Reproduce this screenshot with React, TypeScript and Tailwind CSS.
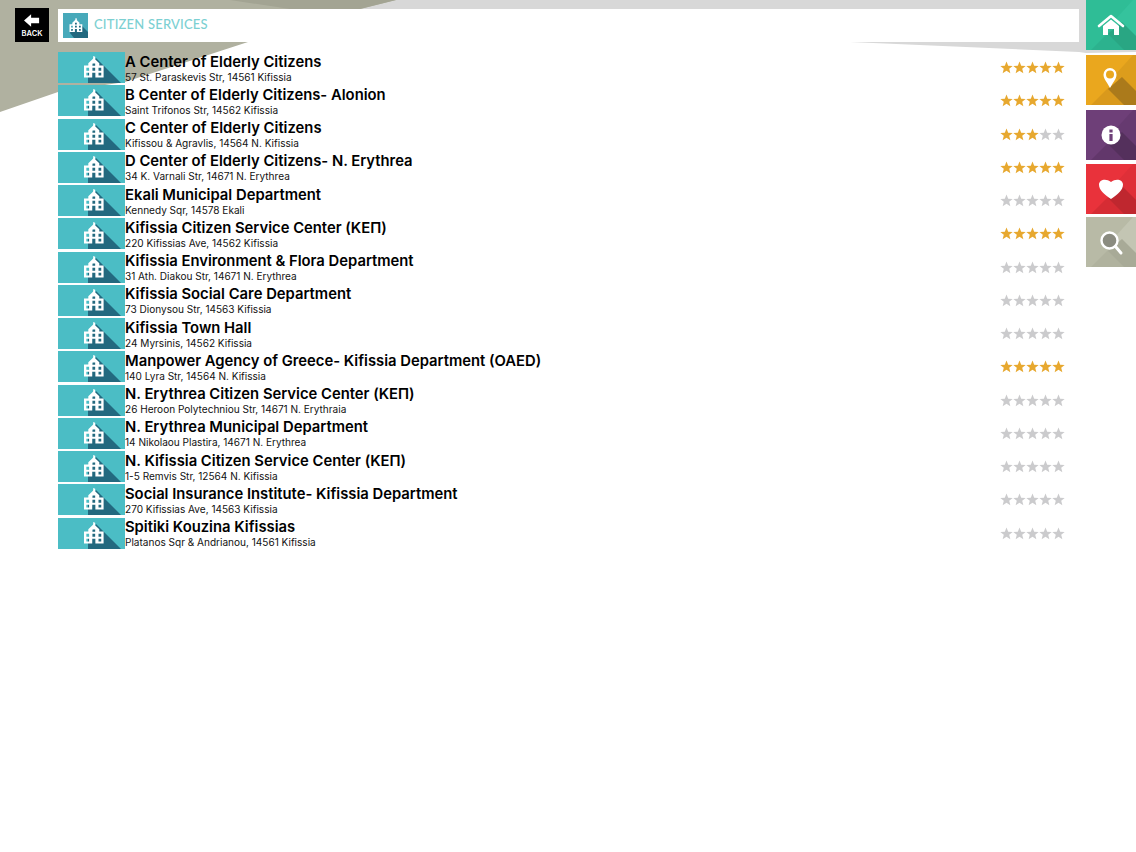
import React from 'react';

const places = [
  { name: 'A Center of Elderly Citizens', address: '57 St. Paraskevis Str, 14561 Kifissia', rating: 5 },
  { name: 'B Center of Elderly Citizens- Alonion', address: 'Saint Trifonos Str, 14562 Kifissia', rating: 5 },
  { name: 'C Center of Elderly Citizens', address: 'Kifissou & Agravlis, 14564 N. Kifissia', rating: 3 },
  { name: 'D Center of Elderly Citizens- N. Erythrea', address: '34 K. Varnali Str, 14671 N. Erythrea', rating: 5 },
  { name: 'Ekali Municipal Department', address: 'Kennedy Sqr, 14578 Ekali', rating: 0 },
  { name: 'Kifissia Citizen Service Center (ΚΕΠ)', address: '220 Kifissias Ave, 14562 Kifissia', rating: 5 },
  { name: 'Kifissia Environment & Flora Department', address: '31 Ath. Diakou Str, 14671 N. Erythrea', rating: 0 },
  { name: 'Kifissia Social Care Department', address: '73 Dionysou Str, 14563 Kifissia', rating: 0 },
  { name: 'Kifissia Town Hall', address: '24 Myrsinis, 14562 Kifissia', rating: 0 },
  { name: 'Manpower Agency of Greece- Kifissia Department (OAED)', address: '140 Lyra Str, 14564 N. Kifissia', rating: 5 },
  { name: 'N. Erythrea Citizen Service Center (ΚΕΠ)', address: '26 Heroon Polytechniou Str, 14671 N. Erythraia', rating: 0 },
  { name: 'N. Erythrea Municipal Department', address: '14 Nikolaou Plastira, 14671 N. Erythrea', rating: 0 },
  { name: 'N. Kifissia Citizen Service Center (ΚΕΠ)', address: '1-5 Remvis Str, 12564 N. Kifissia', rating: 0 },
  { name: 'Social Insurance Institute- Kifissia Department', address: '270 Kifissias Ave, 14563 Kifissia', rating: 0 },
  { name: 'Spitiki Kouzina Kifissias', address: 'Platanos Sqr & Andrianou, 14561 Kifissia', rating: 0 },
];

// schoolhouse glyph, 20 x 22 units
function Building({ x, y, scale }: { x: number; y: number; scale: number }) {
  return (
    <g transform={`translate(${x} ${y}) scale(${scale})`} fill="#fff">
      <path d="M9.4 0 L11.4 0.8 L11.4 3.4 L9.4 3.4 Z" />
      <path
        fillRule="evenodd"
        d="M10 2 L15.6 7.4 L15.6 9.6 L20 9.6 L20 22 L0 22 L0 9.6 L4.4 9.6 L4.4 7.4 Z M8.6 7.6 H11.4 V10 H8.6 Z M8.6 12 H11.4 V15 H8.6 Z M2.4 12 H5.2 V15 H2.4 Z M14.8 12 H17.6 V15 H14.8 Z M2.4 17 H5.2 V20 H2.4 Z M14.8 17 H17.6 V20 H14.8 Z M8.4 17 H11.6 V22 H8.4 Z"
      />
    </g>
  );
}

function Star({ on }: { on: boolean }) {
  return (
    <svg viewBox="0 0 24 24" className={on ? 'w-[13px] h-[13px] fill-[#e7a82f]' : 'w-[13px] h-[13px] fill-[#cbcbcd]'}>
      <path d="M12 1 L15.1 8.6 L23.4 9.2 L17 14.5 L19.1 22.6 L12 18.2 L4.9 22.6 L7 14.5 L0.6 9.2 L8.9 8.6 Z" />
    </svg>
  );
}

function Row({ name, address, rating }: { name: string; address: string; rating: number }) {
  return (
    <div className="flex h-[33.25px] items-start">
      <svg viewBox="0 0 67 31" className="w-[67px] h-[31px] shrink-0">
        <rect width="67" height="31" fill="#4bbdc5" />
        <polygon points="38,6 63,31 30,31 30,20" fill="#23697f" />
        <Building x={26} y={4} scale={0.98} />
      </svg>
      <div className="flex-1 min-w-0 pt-[0.6px]">
        <div className="text-[14.8px] leading-[18px] font-semibold text-black">{name}</div>
        <div className="text-[10.05px] leading-[13px] text-[#111]">{address}</div>
      </div>
      <div className="flex pt-[9px] mr-[14px]">
        {[0, 1, 2, 3, 4].map((i) => (
          <Star key={i} on={i < rating} />
        ))}
      </div>
    </div>
  );
}

function Tile({ base, light, dark, shadow, children }: { base: string; light: string; dark: string; shadow: string; children: React.ReactNode }) {
  return (
    <svg viewBox="0 0 50 50" className="w-[50px] h-[50px] block">
      <rect width="50" height="50" fill={base} />
      <polygon points="47,0 50,0 50,42 28,21" fill={light} />
      <polygon points="5,50 25,30 45,50" fill={dark} />
      <polygon points="22,34 36,22 50,36 50,50 38,50" fill={shadow} />
      {children}
    </svg>
  );
}

export default function App() {
  return (
    <div className="relative h-[852px] w-[1136px] overflow-hidden bg-white flex font-['Inter',sans-serif]">
      {/* background wedges behind the header */}
      <svg className="absolute inset-0 w-[1136px] h-[120px]" viewBox="0 0 1136 120">
        <polygon points="370,0 1136,0 1136,52 1086,53 1079,52 850,42 1079,42 1079,9 340,9" fill="#d8d8d8" />
        <polygon points="0,0 396,0 360,9 58,9 58,42 248,42 125,82 58,92 0,112" fill="#b0b1a0" />
        <polygon points="230,0 396,0 360,9 290,9" fill="#a3a493" />
      </svg>

      <div className="relative w-[58px] shrink-0 pl-[15px] pt-[8px]">
        <div className="w-[34px] h-[34px] bg-black flex flex-col items-center pt-[6px]">
          <svg viewBox="0 0 18 14" className="w-[16px] h-[13px]">
            <path d="M0 7 L8 0 V4 H17 V10 H8 V14 Z" fill="#fff" />
          </svg>
          <span className="text-[7.5px] leading-[9px] mt-[2px] font-semibold text-white">BACK</span>
        </div>
      </div>

      <div className="relative w-[1021px] shrink-0 pt-[9px]">
        <div className="h-[33px] bg-white flex items-center pl-[5px] gap-[6px]">
          <svg viewBox="0 0 25 25" className="w-[25px] h-[25px]">
            <rect width="25" height="25" fill="#47a9ba" />
            <polygon points="13,7 25,19 25,25 11,25 7,20" fill="#23697f" />
            <Building x={6.5} y={5} scale={0.64} />
          </svg>
          <span className="font-['Lato',sans-serif] text-[13px] font-medium tracking-[0.2px] text-[#7cd0d2] -mt-[2px]">CITIZEN SERVICES</span>
        </div>
        <div className="pt-[10px]">
          {places.map((p) => (
            <Row key={p.name} name={p.name} address={p.address} rating={p.rating} />
          ))}
        </div>
      </div>

      <div className="relative ml-[7px] w-[50px] shrink-0 flex flex-col gap-[4px]">
        <Tile base="#2fbd96" light="#35c39d" dark="#2cb28e" shadow="#29a683">
          <path d="M13 26 L25 16 L37 26" fill="none" stroke="#fff" strokeWidth="2.6" strokeLinecap="round" strokeLinejoin="round" />
          <path d="M17 26 L25 19.5 L33 26 V35 H28 V29 H22 V35 H17 Z" fill="#fff" />
        </Tile>
        <div className="mt-[1px]">
          <Tile base="#eaa71e" light="#dc9d1c" dark="#d9991c" shadow="#ab7a1b">
            <path fillRule="evenodd" d="M24 33 C21 27 17.5 24 17.5 19.5 A6.5 6.5 0 0 1 30.5 19.5 C30.5 24 27 27 24 33 Z M24 15.5 A4 4 0 1 0 24 23.5 A4 4 0 1 0 24 15.5 Z" fill="#fff" />
          </Tile>
        </div>
        <div className="mt-[1px]">
          <Tile base="#6e3f78" light="#663a70" dark="#62376b" shadow="#54305c">
            <circle cx="25" cy="25" r="9.5" fill="#fff" />
            <rect x="23.4" y="24" width="3.2" height="7" fill="#6e3f78" />
            <rect x="23.4" y="19.5" width="3.2" height="3" fill="#6e3f78" />
          </Tile>
        </div>
        <Tile base="#e9323b" light="#df2f38" dark="#d62c34" shadow="#bf272f">
          <path d="M25 35 C18 30 13 26 13 20.5 C13 16 19.5 13.5 25 18 C30.5 13.5 37 16 37 20.5 C37 26 32 30 25 35 Z" fill="#fff" />
        </Tile>
        <div className="-mt-[1px]">
          <Tile base="#b8baa6" light="#c3c5b3" dark="#b0b29e" shadow="#a8aa97">
            <circle cx="23.5" cy="23.5" r="8" fill="#8b8c80" stroke="#fff" strokeWidth="2.4" />
            <path d="M29.5 29.5 L35 36" stroke="#fff" strokeWidth="3" strokeLinecap="round" />
          </Tile>
        </div>
      </div>
    </div>
  );
}
